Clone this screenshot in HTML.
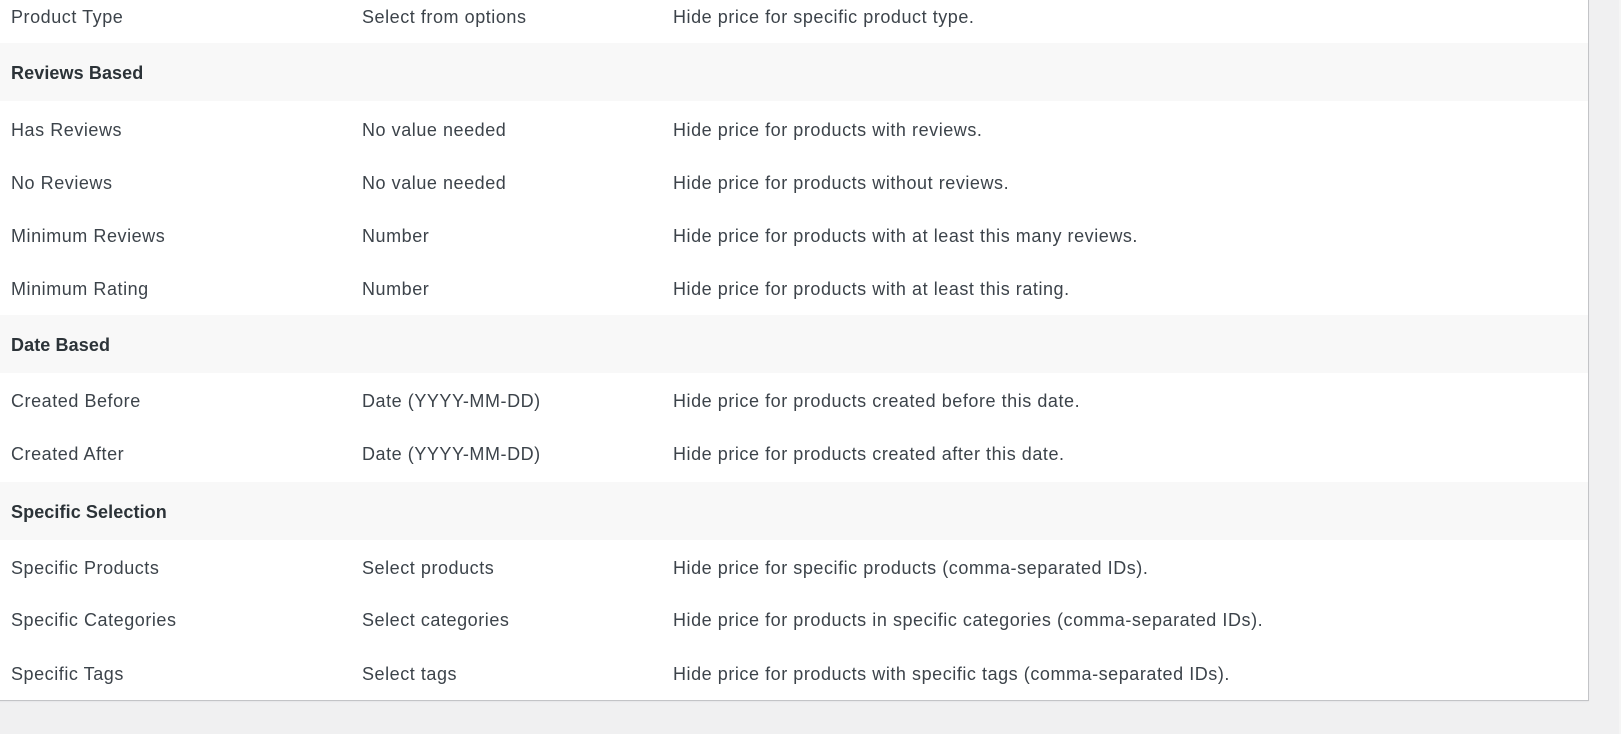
<!DOCTYPE html>
<html><head><style>
body{margin:0;width:1621px;height:734px;background:#f0f0f1;overflow:hidden;font-family:"Liberation Sans",sans-serif;}
.box{position:absolute;left:-1px;top:-10px;width:1588px;height:709px;background:#fff;border:1px solid #c3c4c7;box-shadow:0 1px 1px rgba(0,0,0,.04);}
.h{position:absolute;left:0;width:1588px;height:58px;background:#f8f8f8;}
.r{position:absolute;left:0;height:24px;line-height:24px;font-size:18px;letter-spacing:0.55px;color:#3c434a;white-space:nowrap;}
.r span{position:absolute;top:0;}
.b{font-weight:bold;color:#2c3338;letter-spacing:0.1px;}
.sb{position:absolute;right:0;top:0;width:2px;height:734px;background:#f5f5f5;}
</style></head><body>
<div class="box"></div>
<div class="h" style="top:43px"></div>
<div class="h" style="top:315px"></div>
<div class="h" style="top:482px"></div>
<div class="sb"></div>
<div class="r" style="top:5px"><span style="left:11px">Product Type</span><span style="left:362px">Select from options</span><span style="left:673px">Hide price for specific product type.</span></div>
<div class="r b" style="top:61px"><span style="left:11px">Reviews Based</span></div>
<div class="r" style="top:118px"><span style="left:11px">Has Reviews</span><span style="left:362px">No value needed</span><span style="left:673px">Hide price for products with reviews.</span></div>
<div class="r" style="top:171px"><span style="left:11px">No Reviews</span><span style="left:362px">No value needed</span><span style="left:673px">Hide price for products without reviews.</span></div>
<div class="r" style="top:224px"><span style="left:11px">Minimum Reviews</span><span style="left:362px">Number</span><span style="left:673px">Hide price for products with at least this many reviews.</span></div>
<div class="r" style="top:277px"><span style="left:11px">Minimum Rating</span><span style="left:362px">Number</span><span style="left:673px">Hide price for products with at least this rating.</span></div>
<div class="r b" style="top:333px"><span style="left:11px">Date Based</span></div>
<div class="r" style="top:389px"><span style="left:11px">Created Before</span><span style="left:362px">Date (YYYY-MM-DD)</span><span style="left:673px">Hide price for products created before this date.</span></div>
<div class="r" style="top:442px"><span style="left:11px">Created After</span><span style="left:362px">Date (YYYY-MM-DD)</span><span style="left:673px">Hide price for products created after this date.</span></div>
<div class="r b" style="top:500px"><span style="left:11px">Specific Selection</span></div>
<div class="r" style="top:556px"><span style="left:11px">Specific Products</span><span style="left:362px">Select products</span><span style="left:673px">Hide price for specific products (comma-separated IDs).</span></div>
<div class="r" style="top:608px"><span style="left:11px">Specific Categories</span><span style="left:362px">Select categories</span><span style="left:673px">Hide price for products in specific categories (comma-separated IDs).</span></div>
<div class="r" style="top:662px"><span style="left:11px">Specific Tags</span><span style="left:362px">Select tags</span><span style="left:673px">Hide price for products with specific tags (comma-separated IDs).</span></div>
</body></html>
